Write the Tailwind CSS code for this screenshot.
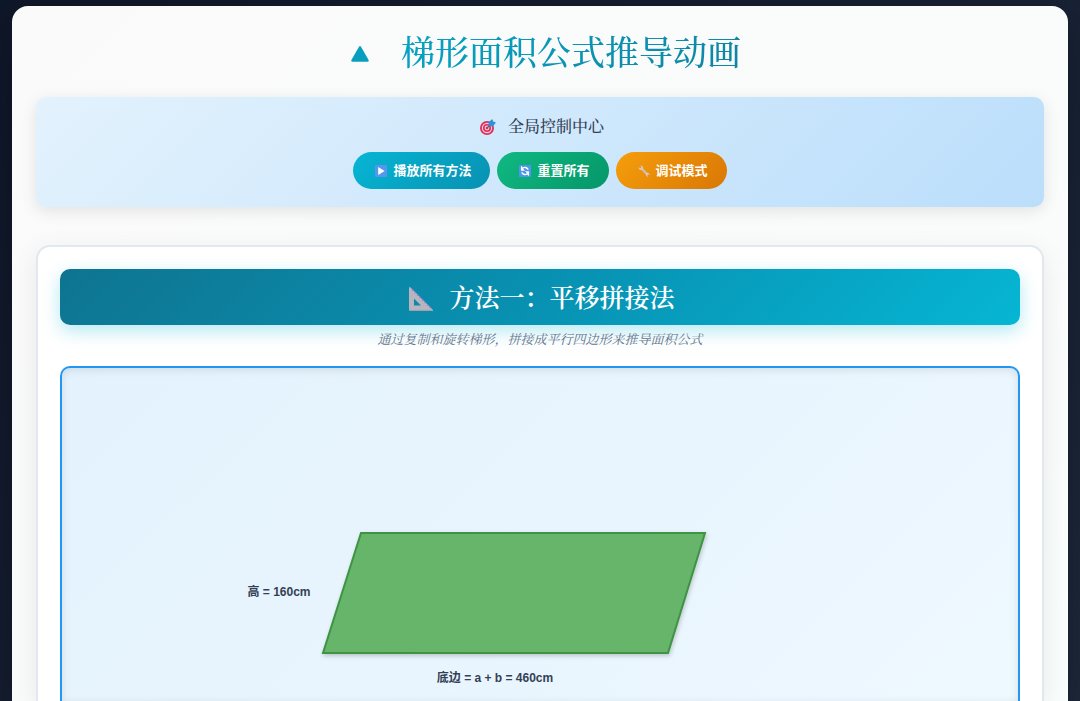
<!DOCTYPE html>
<html lang="zh-CN">
<head>
<meta charset="utf-8">
<meta name="viewport" content="width=device-width, initial-scale=1">
<title>梯形面积公式推导动画</title>
<script src="https://cdn.jsdelivr.net/npm/@tailwindcss/browser@4"></script>
</head>
<body class="min-h-screen overflow-x-hidden bg-linear-135 from-[#0f172a] to-[#1e293b] px-3 pt-1.5 font-['Liberation_Serif','Noto_Serif_CJK_SC','Noto_Sans_CJK_SC',serif] text-[#334155]">
<main class="rounded-t-2xl bg-linear-135 from-[#fafafa] to-[#f9fdfb] px-6 pt-6 shadow-[0_20px_50px_rgba(0,0,0,0.3)]">
  <h1 class="flex h-12 items-center justify-center gap-8 pl-3 text-[34px] leading-12 font-medium">
    <svg class="h-4 w-[18px]" viewBox="0 0 18 16" aria-hidden="true"><path d="M8 .8Q9 -.6 10 .8L17.6 14Q18.2 15.7 16.5 15.7H1.5Q-.2 15.7.4 14Z" fill="#089fbf"/></svg>
    <span class="bg-linear-135 from-[#06a3c4] to-[#0e84a3] bg-clip-text text-transparent">梯形面积公式推导动画</span>
  </h1>

  <section class="mt-[19px] flex h-[110px] flex-col items-center rounded-[10px] bg-linear-135 from-[#e3f2fd] to-[#bbdefb] pt-5 shadow-[0_4px_16px_rgba(0,0,0,0.1)]">
    <h2 class="flex h-5 items-center gap-3 pl-1 text-base leading-5 font-medium">
      <svg class="size-4" viewBox="0 0 16 16" aria-hidden="true">
        <circle cx="7" cy="9" r="7" fill="#dd2e5b"/><circle cx="7" cy="9" r="5.2" fill="#f6cddd"/><circle cx="7" cy="9" r="4" fill="#dd2e5b"/><circle cx="7" cy="9" r="2.4" fill="#f6cddd"/><circle cx="7" cy="9" r="1.3" fill="#dd2e5b"/>
        <path d="M7 9L12 4" stroke="#4b6a95" stroke-width="1.2"/><path d="M8.5 3.2L12.3 0L13.2 2.4L16 3.6L12.8 7.4L9 7Z" fill="#2f91dc"/>
      </svg>全局控制中心</h2>
    <div class="mt-[15px] flex gap-[7px] font-['Liberation_Sans','Noto_Sans_CJK_SC',sans-serif] text-[13px] font-bold text-white">
      <button class="flex h-[37px] items-center gap-1.5 rounded-full bg-linear-135 from-[#06b6d4] to-[#0891b2] pr-[19px] pl-[22px]">
        <svg class="size-3" viewBox="0 0 12 12" aria-hidden="true"><rect width="12" height="12" rx="1" fill="#5596ee"/><path d="M3.2 2L9.6 6L3.2 10Z" fill="#fff"/></svg>播放所有方法</button>
      <button class="flex h-[37px] items-center gap-1.5 rounded-full bg-linear-135 from-[#10b981] to-[#059669] pr-[19px] pl-[22px]">
        <svg class="size-3" viewBox="0 0 12 12" aria-hidden="true"><rect width="12" height="12" rx="1" fill="#4c96ee"/><path d="M2.6 5.2V2.2L3.7 3.3Q6.8 1 9.3 4.7M9.4 6.8V9.8L8.3 8.7Q5.2 11 2.7 7.3" fill="none" stroke="#fff" stroke-width="1.3"/><path d="M2.2 2V5.8H6Z M9.8 10V6.2H6Z" fill="#fff"/></svg>重置所有</button>
      <button class="flex h-[37px] items-center gap-1.5 rounded-full bg-linear-135 from-[#f59e0b] to-[#d97706] pr-[19px] pl-[22px]">
        <svg class="size-3" viewBox="0 0 12 12" aria-hidden="true"><path d="M3 3L9.5 9.5" stroke="#d3bfb2" stroke-width="2.2"/><path d="M2.2.5Q5 0 5.4 3.2Q4.5 5.4 2.6 5Q.2 4.6.4 2L2.2 3.5L3.5 2.3ZM8.2 8Q11.6 6.8 11.8 10.3L10.2 9.2L9.3 10.2L10.4 11.8Q7 11.5 8.2 8Z" fill="#d9c8be"/></svg>调试模式</button>
    </div>
  </section>

  <section class="mt-[38px] rounded-t-[14px] border-2 border-b-0 border-[#e2e8f0] bg-white px-[22px] pt-[22px] shadow-[0_8px_28px_rgba(0,0,0,0.08)]">
    <h2 class="flex h-14 items-center justify-center gap-4 rounded-[10px] bg-linear-135 from-[#0e7490] via-[#0891b2] to-[#06b6d4] pt-1 pl-1 text-[25px] font-semibold text-white shadow-[0_6px_18px_rgba(6,182,212,0.3)]">
      <svg class="size-6" viewBox="0 0 24 24" aria-hidden="true"><path fill-rule="evenodd" d="M0 1.2Q0-.6 1.5.5L23.5 22.5Q24.5 24 23 24H1.5Q0 24 0 22.5ZM5 11.5V18.5H12Z" fill="#b9b5c0"/><path d="M3.2 2.6L22.5 21.9" stroke="#9a7ed0" stroke-width="1.6" stroke-dasharray="1.5 2"/><path d="M.5 23.4H23" stroke="#a19dab" stroke-width="1"/></svg>方法一：平移拼接法</h2>
    <p class="mt-[3px] text-center text-[13px] leading-6 text-[#64748b] italic">通过复制和旋转梯形，拼接成平行四边形来推导面积公式</p>
    <div class="mt-[14px] rounded-t-[10px] border-2 border-b-0 border-[#2196f3] bg-linear-135 from-[#e3f2fd] to-[#eef8ff] shadow-[inset_0_2px_8px_rgba(0,0,0,0.1)]">
      <svg class="block h-[333px] w-full overflow-hidden" viewBox="62 368 956 333" preserveAspectRatio="xMidYMin meet" role="img" aria-label="平行四边形">
        <path class="drop-shadow-[1px_2px_2px_rgba(0,0,0,0.2)]" d="M361 533H705L668 653H323Z" fill="#66b56b" stroke="#3d9442" stroke-width="2"/>
        <g class="fill-[#334155] font-['Liberation_Sans','Noto_Sans_CJK_SC',sans-serif] text-[12px] font-bold" text-anchor="middle">
          <text x="279" y="596">高 = 160cm</text>
          <text x="495" y="682">底边 = a + b = 460cm</text>
        </g>
      </svg>
    </div>
  </section>
</main>
</body>
</html>
